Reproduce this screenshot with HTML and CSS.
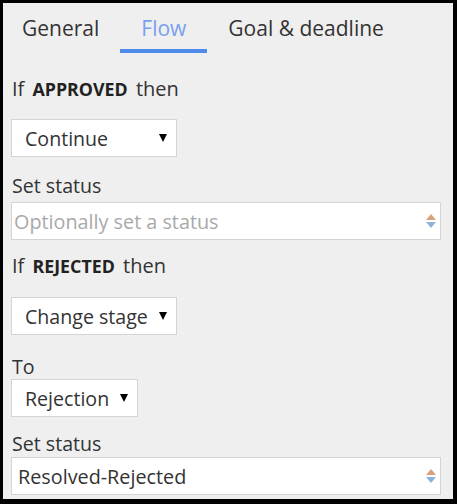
FILE: index.html
```html
<!DOCTYPE html>
<html>
<head>
<meta charset="utf-8">
<link rel="stylesheet" href="styles.css">
</head>
<body>
<div class="frame">
  <div class="tabs">
    <div class="tab">General</div>
    <div class="tab active">Flow</div>
    <div class="tab">Goal &amp; deadline</div>
  </div>
  <div class="form">
    <div class="cond">If <b>APPROVED</b> then</div>
    <div class="select s-continue"><span>Continue</span><span class="caret"></span></div>
    <div class="label lbl-status">Set status</div>
    <div class="input placeholder"><span>Optionally set a status</span><span class="spin"><i class="up"></i><i class="down"></i></span></div>
    <div class="cond cond2">If <b>REJECTED</b> then</div>
    <div class="select s-change"><span>Change stage</span><span class="caret"></span></div>
    <div class="label lbl-to">To</div>
    <div class="select s-rej"><span>Rejection</span><span class="caret"></span></div>
    <div class="label lbl-status2">Set status</div>
    <div class="input value input2"><span>Resolved-Rejected</span><span class="spin"><i class="up"></i><i class="down"></i></span></div>
  </div>
</div>
</body>
</html>
```
FILE: styles.css
```css
* { box-sizing: border-box; }
html, body { margin: 0; padding: 0; }
body {
  width: 457px;
  height: 504px;
  background: #000;
  font-family: "Open Sans", "Noto Sans", sans-serif;
  color: #333;
}
.frame {
  width: 457px;
  height: 504px;
  border-style: solid;
  border-color: #000;
  border-width: 3px 4px 5px 3px;
  background: #efefef;
  overflow: hidden;
}
.tabs {
  display: flex;
  height: 50px;
}
.tab {
  font-size: 21px;
  line-height: 24px;
  padding: 13px 21px 0;
  color: #333;
  border-bottom: 4px solid transparent;
  height: 50px;
}
.tab:first-child { padding-left: 19px; }
.tab.active {
  color: #7a9ff0;
  border-bottom-color: #4f8bea;
}
.form {
  padding: 0 12px 0 8px;
  display: flex;
  flex-direction: column;
  align-items: flex-start;
}
.cond {
  font-size: 20px;
  line-height: 26px;
  margin-top: 23px;
  padding-left: 1px;
}
.cond b {
  font-weight: 700;
  font-size: 17.8px;
  margin: 0 3px;
  color: #222;
}
.select {
  background: #fff;
  border: 1px solid #d4d4d4;
  height: 38px;
  display: flex;
  align-items: center;
  justify-content: space-between;
  font-size: 19.6px;
  color: #333;
  padding: 0 9px 0 13px;
}
.s-continue { width: 166px; margin-top: 17px; }
.s-change { width: 166px; margin-top: 18px; }
.s-rej { width: 127px; margin-top: 0; }
.caret {
  width: 0;
  height: 0;
  border-left: 4.5px solid transparent;
  border-right: 4.5px solid transparent;
  border-top: 8px solid #000;
}
.label {
  font-size: 19.6px;
  line-height: 24px;
  padding-left: 1px;
}
.lbl-status { margin-top: 17px; }
.lbl-to { margin-top: 20px; }
.lbl-status2 { margin-top: 15px; }
.input {
  width: 430px;
  height: 38px;
  background: #fff;
  border: 1px solid #d4d4d4;
  display: flex;
  align-items: center;
  justify-content: space-between;
  font-size: 19.8px;
  margin-top: 4px;
  padding-right: 4px;
}
.input2 { margin-top: 1px; }
.input.placeholder { color: #a9a9a9; padding-left: 2px; }
.input.value { color: #333; padding-left: 6px; }
.spin {
  display: flex;
  flex-direction: column;
  gap: 2px;
}
.spin i {
  display: block;
  width: 0;
  height: 0;
  border-left: 5px solid transparent;
  border-right: 5px solid transparent;
}
.spin .up { border-bottom: 6px solid #d9a27a; }
.spin .down { border-top: 6px solid #8fb3d6; }
.cond2 { margin-top: 13px; }
```
